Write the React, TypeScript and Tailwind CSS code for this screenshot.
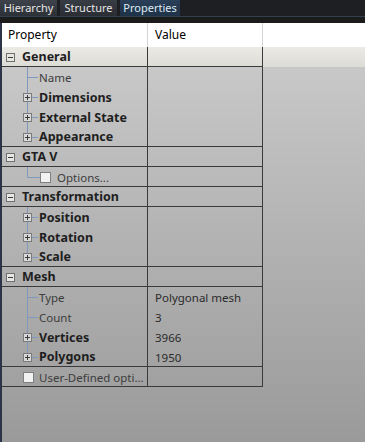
import React from "react";

type Row =
  | { kind: "cat"; label: string }
  | { kind: "child"; label: string; bold?: boolean; expand?: boolean; last?: boolean; value?: string }
  | { kind: "optcheck"; label: string }
  | { kind: "rootcheck"; label: string };

const rows: Row[] = [
  { kind: "cat", label: "General" },
  { kind: "child", label: "Name" },
  { kind: "child", label: "Dimensions", bold: true, expand: true },
  { kind: "child", label: "External State", bold: true, expand: true },
  { kind: "child", label: "Appearance", bold: true, expand: true, last: true },
  { kind: "cat", label: "GTA V" },
  { kind: "optcheck", label: "Options..." },
  { kind: "cat", label: "Transformation" },
  { kind: "child", label: "Position", bold: true, expand: true },
  { kind: "child", label: "Rotation", bold: true, expand: true },
  { kind: "child", label: "Scale", bold: true, expand: true, last: true },
  { kind: "cat", label: "Mesh" },
  { kind: "child", label: "Type", value: "Polygonal mesh" },
  { kind: "child", label: "Count", value: "3" },
  { kind: "child", label: "Vertices", bold: true, expand: true, value: "3966" },
  { kind: "child", label: "Polygons", bold: true, expand: true, last: true, value: "1950" },
  { kind: "rootcheck", label: "User-Defined opti..." },
];

const FONT = { fontFamily: '"Noto Sans", "Open Sans", sans-serif' };

function Minus() {
  return (
    <svg width="20" height="19" className="shrink-0">
      <rect x="4.5" y="6.5" width="8" height="8" fill="#e6e6e3" stroke="#6f6f6f" />
      <line x1="6" y1="10.5" x2="11" y2="10.5" stroke="#3a3a3a" />
    </svg>
  );
}

function Tree({ last, expand, h, check }: { last?: boolean; expand?: boolean; h: number; check?: boolean }) {
  const w = check ? 49 : 37;
  return (
    <svg width={w} height={h} className="shrink-0">
      <line x1="25.5" y1="0" x2="25.5" y2={last ? 10.5 : h} stroke="#7f98bd" />
      <line x1="25.5" y1="10.5" x2={check ? 38 : 36} y2="10.5" stroke="#7f98bd" />
      {expand && (
        <g>
          <rect x="21.5" y="6.5" width="8" height="8" fill="#d9d9d9" stroke="#7a7a7a" />
          <line x1="23" y1="10.5" x2="28" y2="10.5" stroke="#3a3a3a" />
          <line x1="25.5" y1="8" x2="25.5" y2="13" stroke="#3a3a3a" />
        </g>
      )}
      {check && <rect x="38.5" y="5.5" width="10" height="10" fill="#f2f2f2" stroke="#7f7f7f" />}
    </svg>
  );
}

function RowView({ row }: { row: Row }) {
  const bordered = row.kind === "cat" || row.kind === "optcheck" || row.kind === "rootcheck" || (row.kind === "child" && row.last);
  const h = bordered ? 19 : 20;
  const isGeneral = row.kind === "cat" && row.label === "General";
  let cell1: React.ReactNode = null;
  let value = "";
  if (row.kind === "cat") {
    cell1 = (
      <>
        <Minus />
        <span className="pt-[2px] text-[12.5px] font-bold text-[#1e1e1e]">{row.label}</span>
      </>
    );
  } else if (row.kind === "child") {
    value = row.value ?? "";
    cell1 = (
      <>
        <Tree last={row.last} expand={row.expand} h={h} />
        <span className={`pt-[2px] ${row.bold ? "text-[12.5px] font-bold text-[#1e1e1e]" : "text-[#3c3c3c]"}`}>{row.label}</span>
      </>
    );
  } else if (row.kind === "optcheck") {
    cell1 = (
      <>
        <Tree last h={h} check />
        <span className="pl-[6px] pt-[2px] text-[#3c3c3c]">{row.label}</span>
      </>
    );
  } else {
    cell1 = (
      <>
        <svg width="37" height={h} className="shrink-0">
          <rect x="21.5" y="5.5" width="10" height="10" fill="#f2f2f2" stroke="#7f7f7f" />
        </svg>
        <span className="whitespace-nowrap pt-[2px] text-[#3c3c3c]">{row.label}</span>
      </>
    );
  }
  return (
    <div className={`flex h-[20px] ${isGeneral ? "bg-[linear-gradient(to_bottom,#ebeae5,#dcdbd5)]" : ""}`}>
      <div className={`flex w-[146px] items-center border-r border-[#3a3a3a] ${bordered ? "border-b" : ""}`}>{cell1}</div>
      <div className={`flex w-[115px] items-center border-r border-[#3a3a3a] pl-[7px] text-[#2a2a2a] ${bordered ? "border-b" : ""}`}>
        <span className="pt-[2px]">{value}</span>
      </div>
    </div>
  );
}

export default function App() {
  return (
    <div className="flex h-[442px] w-[365px] flex-col overflow-hidden bg-[#1c1e22] text-[11.5px]" style={FONT}>
      <div className="flex h-[17px] items-stretch gap-[3px] border-b border-[#33404f] bg-[#1d1f23] text-[11px]">
        <div className="flex w-[57px] items-center justify-center bg-[linear-gradient(to_bottom,#3e434b,#2c3037)] text-[#e6e6e6]">Hierarchy</div>
        <div className="flex w-[57px] items-center justify-center bg-[linear-gradient(to_bottom,#383c44,#2a2d33)] text-[#e6e6e6]">Structure</div>
        <div className="flex w-[60px] items-center justify-center bg-[linear-gradient(to_bottom,#2a4058,#1e3248)] text-[#dfeaf2]">Properties</div>
      </div>
      <div className="h-[6px] bg-[#1b1b1b]" />
      <div className="flex flex-1">
        <div className="w-[2px] bg-[#2b3547]" />
        <div className="flex flex-1 flex-col bg-[linear-gradient(to_bottom,#cdcdcd,#9a9a9a)]">
          <div className="flex h-[24px] bg-white text-[12px] text-black">
            <div className="flex w-[146px] items-center border-r border-[#d4d4d4] pl-[6px]">Property</div>
            <div className="flex w-[115px] items-center border-r border-[#d4d4d4] pl-[7px]">Value</div>
          </div>
          {rows.map((r, i) => (
            <RowView key={i} row={r} />
          ))}
        </div>
      </div>
    </div>
  );
}
